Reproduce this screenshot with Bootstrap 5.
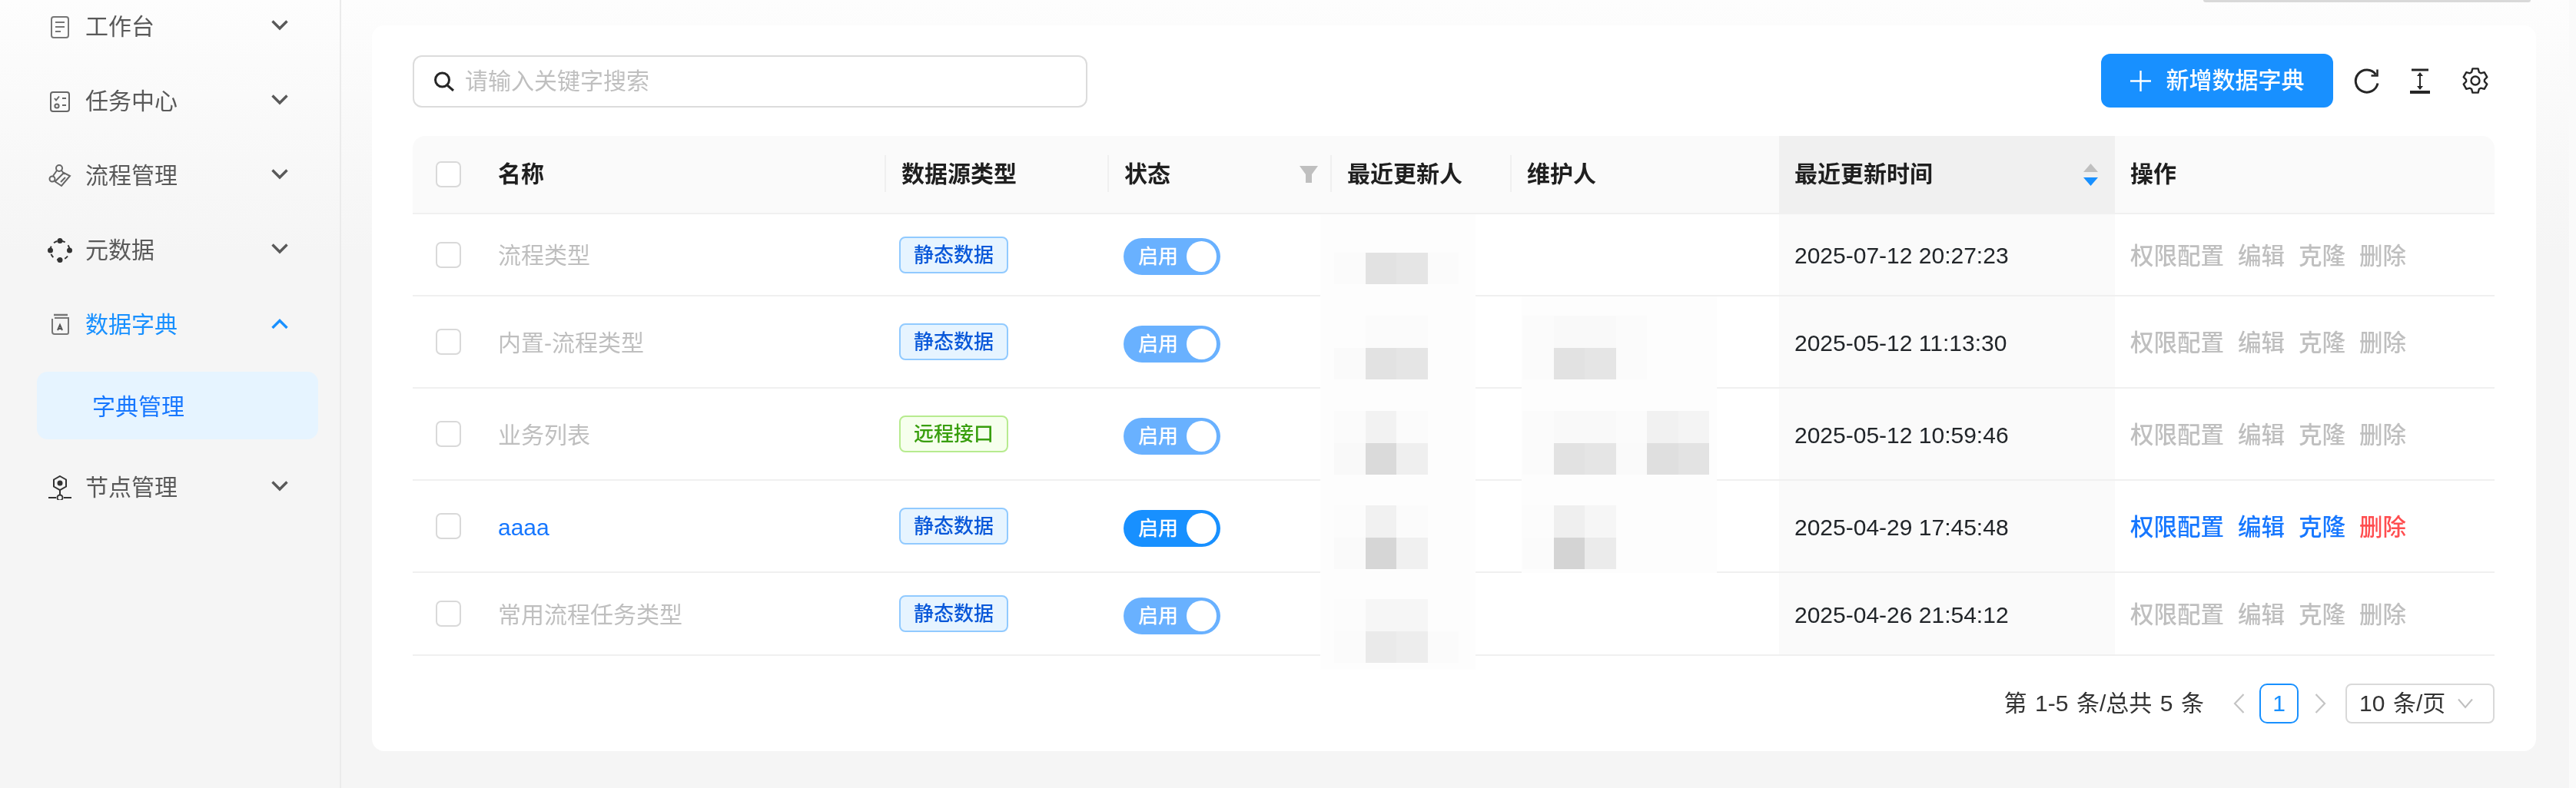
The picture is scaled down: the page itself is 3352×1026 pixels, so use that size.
<!DOCTYPE html>
<html lang="zh-CN">
<head>
<meta charset="utf-8">
<title>字典管理</title>
<link rel="stylesheet" href="https://cdn.jsdelivr.net/npm/bootstrap@5.3.0/dist/css/bootstrap.min.css">
<style>
html,body{height:1026px;overflow:hidden;background:#f5f5f5}
body{font-family:"Liberation Sans","Noto Sans CJK SC",sans-serif;font-size:30px;line-height:1.4;color:#262626}
.shell{height:1026px;background:linear-gradient(180deg,#fdfdfd 0,#f5f5f5 330px);filter:blur(.55px)}
.side{width:444px;flex:none;border-right:2px solid #ebebeb}
.menu{margin-top:-8px;padding:0;list-style:none}
.menu-row{height:86px;margin-bottom:11px;padding:0 67px 0 62px;color:#595959;gap:17px}
.menu-row.on{color:#1890ff;margin-bottom:18px}
.menu-row .lab{flex:1}
.ico{width:32px;height:32px;flex:none}
.chev{width:22px;height:15px;flex:none;margin-top:-6px}
.sub{height:88px;margin:0 28px 20px 48px;padding:3px 0 0 72px;border-radius:14px;background:#e6f4ff;color:#1677ff}
.main{flex:1;min-width:0;padding-right:43px}
.topedge{width:426px;height:3px;margin:0 7px 0 auto;background:#d9d9d9;border-radius:0 0 5px 5px}
.panel{margin:30px 0 0 40px;padding:37px 54px 36px 53px;background:#fff;border-radius:16px}
.strip{width:9px;flex:none;background:#fafafa}
.searchbox{width:878px;height:68px;padding:0 24px 0 25px;border:2px solid #dcdcdc;border-radius:12px;color:#bfbfbf;gap:13px;margin-top:1px}
.searchbox svg{width:28px;height:26px;flex:none}
.addbtn{width:302px;height:70px;padding:0;gap:20px;background:#1890ff;border:0;border-radius:12px;color:#fff;font-size:30px;line-height:1.4;font-weight:500}
.addbtn:hover{background:#1890ff;color:#fff}
.tool{flex:none;display:block}
.tool-a{margin-left:27px}
.tool-b{margin-left:39px}
.tool-c{margin-left:42px;margin-right:8px}
.dict{margin:37px 0 0;table-layout:fixed;width:2709px;border-collapse:separate;border-spacing:0;--bs-table-bg:transparent}
.dict>:not(caption)>*>*{padding:0 0 0 20px;border-bottom:2px solid #f0f0f0;background:transparent;color:inherit;box-shadow:none;vertical-align:middle}
.dict thead tr{height:102px}
.dict>thead>tr>th{background:#fafafa;font-weight:700;color:#1f1f1f;position:relative}
.dict thead th:first-child{border-top-left-radius:16px}
.dict thead th:last-child{border-top-right-radius:16px}
.dict thead th.sep::after{content:"";position:absolute;right:0;top:25px;height:48px;width:2px;background:#f0f0f0}
.dict>thead>tr>th.sorted{background:#f0f0f0}
.dict>tbody>tr>td.sorted{background:#fafafa;padding-top:3px}
.rh-a{height:107px}.rh-b{height:120px}.rh-c{height:108px}
.dict .form-check-input{width:33px;height:34px;margin:0 0 0 10px;display:block;border:2px solid #d9d9d9;border-radius:7px;float:none}
.dict>tbody>tr>td.nm{color:#bfbfbf;padding-top:3px}
.dict>tbody>tr>td.nm.live{color:#1677ff}
.tag{display:inline-block;width:142px;height:48px;border:2px solid #91caff;border-radius:8px;background:#e6f4ff;color:#0958d9;font-size:26px;font-weight:500;line-height:44px;text-align:center;margin-left:-3px}
.tag.ok{border-color:#b7eb8f;background:#f6ffed;color:#389e0d}
.swt{width:126px;height:48px;padding:0 5px 0 19px;border-radius:24px;background:#69b1ff;color:#fff;font-size:26px;font-weight:500;line-height:1;margin:5px 0 0 -1px}
.swt.live{background:#1890ff}
.swt i{display:block;width:39px;height:40px;border-radius:50%;background:#fff}
.ops{gap:18px;color:#bfbfbf;font-size:30.5px;font-weight:500;padding-top:3px}
.ops.live{color:#1677ff}
.ops.live .del{color:#ff4d4f}
.carets{gap:7px;width:19px}
.head-filter{padding-right:18px}
.head-sort{padding-right:22px}
.dict .wrapcell{position:relative}
.mz{position:absolute;top:0;bottom:-2px;background:#fdfdfd;z-index:1}
.mz.a{left:-15px;width:202px}
.mz.b{left:13px;width:254px}
.mzg{position:absolute;display:grid;grid-auto-rows:41.5px;grid-template-columns:repeat(6,40.5px)}
.mz.a .mzg{left:18px}
.mz.b .mzg{left:1px}
.bt14 .mzg{bottom:16px}.bt10 .mzg{bottom:12px}.bt6 .mzg{bottom:8px}.bt3 .mzg{bottom:5px}
.mz.over{bottom:-20px}
.over .mzg{bottom:9px}
.cfb{background:#fbfbfb}.cfc{background:#fcfcfc}.cfa{background:#fafafa}.cf9{background:#f9f9f9}.cf6{background:#f6f6f6}.cf4{background:#f4f4f4}.cf2{background:#f2f2f2}.cf1{background:#f1f1f1}.cf0{background:#f0f0f0}.cef{background:#efefef}.ced{background:#ededed}.ceb{background:#ebebeb}.cea{background:#eaeaea}.ce5{background:#e5e5e5}.ce3{background:#e3e3e3}.ce2{background:#e2e2e2}.cdf{background:#dfdfdf}.cda{background:#dadada}.cd6{background:#d6d6d6}.cd4{background:#d4d4d4}.c00{background:transparent}
.pager{margin-top:36px;height:52px;color:#333;word-spacing:2.200px}
.pnum{width:51px;height:52px;border:2px solid #1890ff;border-radius:10px;color:#1890ff;margin:0 21px 0 19px}
.pgo{width:15px;height:28px;flex:none}
.pgo-first{margin-left:38px}
.psize{width:194px;height:52px;margin-left:25px;padding:0 26px 0 16px;border:2px solid #d9d9d9;border-radius:8px}
</style>
</head>
<body>
<div class="shell d-flex">
  <aside class="side">
    <ul class="menu">
      <li class="menu-row d-flex align-items-center">
        <svg class="ico" viewBox="0 0 32 32" fill="none" stroke="#777" stroke-width="2"><rect x="5" y="3" width="22" height="27" rx="3"/><path d="M10 10h12M10 16h12M10 22h7"/></svg>
        <span class="lab">工作台</span>
        <svg class="chev" viewBox="0 0 22 15" fill="none" stroke="#595959" stroke-width="3.4"><path d="M1.5 2.5 11 12l9.500-9.500"/></svg>
      </li>
      <li class="menu-row d-flex align-items-center">
        <svg class="ico" viewBox="0 0 32 32" fill="none" stroke="#666" stroke-width="2"><rect x="4" y="4" width="24" height="25" rx="3"/><path d="M9 12l2 2.500 4-5M19 12h5M19 21h5"/><circle cx="12" cy="22" r="2.600"/></svg>
        <span class="lab">任务中心</span>
        <svg class="chev" viewBox="0 0 22 15" fill="none" stroke="#595959" stroke-width="3.4"><path d="M1.5 2.5 11 12l9.500-9.500"/></svg>
      </li>
      <li class="menu-row d-flex align-items-center">
        <svg class="ico" viewBox="0 0 32 32" fill="none" stroke="#666" stroke-width="2"><circle cx="15" cy="6" r="4"/><path d="M12 9 7 16M18 9l4 5"/><circle cx="6" cy="20" r="3.500"/><path d="M9 23l9 6 11-13-8-4-11 11"/><path d="M17 24l6-6"/></svg>
        <span class="lab">流程管理</span>
        <svg class="chev" viewBox="0 0 22 15" fill="none" stroke="#595959" stroke-width="3.4"><path d="M1.5 2.5 11 12l9.500-9.500"/></svg>
      </li>
      <li class="menu-row d-flex align-items-center">
        <svg class="ico" viewBox="0 0 32 32" fill="#333" stroke="none"><circle cx="16" cy="3.500" r="3.500"/><circle cx="16" cy="28.500" r="3.500"/><circle cx="3.500" cy="16" r="3.500"/><circle cx="28.500" cy="16" r="3.500"/><circle cx="16" cy="16" r="12.500" fill="none" stroke="#333" stroke-width="2" stroke-dasharray="5 5.500" stroke-dashoffset="2.500"/></svg>
        <span class="lab">元数据</span>
        <svg class="chev" viewBox="0 0 22 15" fill="none" stroke="#595959" stroke-width="3.4"><path d="M1.5 2.5 11 12l9.500-9.500"/></svg>
      </li>
      <li class="menu-row on d-flex align-items-center">
        <svg class="ico" viewBox="0 0 32 32" fill="none" stroke="#777" stroke-width="2"><path d="M8 3h18" stroke-width="2.500"/><path d="M6 8v17a3 3 0 0 0 3 3h16a2 2 0 0 0 2-2V7H9"/><path d="M13 23l3-7 3 7M14 21h4" stroke="#555"/></svg>
        <span class="lab">数据字典</span>
        <svg class="chev" viewBox="0 0 22 15" fill="none" stroke="#1890ff" stroke-width="3.4"><path d="M1.5 14 11 4.500 20.500 14"/></svg>
      </li>
      <li class="sub d-flex align-items-center">字典管理</li>
      <li class="menu-row d-flex align-items-center">
        <svg class="ico" viewBox="0 0 32 32" fill="none" stroke="#333" stroke-width="2"><path d="M16 1 24 5.500v9L16 19l-8-4.500v-9z"/><circle cx="16" cy="10" r="2.500" fill="#333"/><path d="M16 19v7M1 29h10M21 29h10"/><circle cx="16" cy="29" r="3.500"/></svg>
        <span class="lab">节点管理</span>
        <svg class="chev" viewBox="0 0 22 15" fill="none" stroke="#595959" stroke-width="3.4"><path d="M1.5 2.5 11 12l9.500-9.500"/></svg>
      </li>
    </ul>
  </aside>
  <main class="main">
    <div class="topedge"></div>
    <section class="panel">
      <div class="d-flex align-items-center">
        <div class="searchbox d-flex align-items-center">
          <svg viewBox="0 0 28 26" fill="none" stroke="#262626" stroke-width="3"><circle cx="11.500" cy="11" r="9"/><path d="M18 18l8 7"/></svg>
          <span>请输入关键字搜索</span>
        </div>
        <button type="button" class="btn addbtn ms-auto d-flex align-items-center justify-content-center">
          <svg width="27" height="27" viewBox="0 0 27 27" stroke="#fff" stroke-width="2.400"><path d="M13.500 0v27M0 13.500h27"/></svg>
          <span>新增数据字典</span>
        </button>
        <svg class="tool tool-a" width="34" height="34" viewBox="0 0 34 34" fill="none" stroke="#262626" stroke-width="3"><path d="M28.500 9A14.500 14.500 0 1 0 31 20.500"/><path d="M30.500 2.500v8h-8" stroke-width="2.500"/></svg>
        <svg class="tool tool-b" width="26" height="33" viewBox="0 0 26 33" fill="none" stroke="#262626"><path d="M2 2h22" stroke-width="3"/><path d="M0 31h26" stroke-width="4"/><path d="M13 6v21" stroke-width="2"/><path d="M9 10l4-5 4 5zM9 23l4 5 4-5z" fill="#262626" stroke="none"/></svg>
        <svg class="tool tool-c" width="34" height="34" viewBox="-17 -17 34 34" fill="none" stroke="#262626" stroke-width="2.400" stroke-linejoin="round"><polygon points="-4.880,-10.960 -3.600,-15.590 3.600,-15.590 4.880,-10.960 7.050,-9.710 11.700,-10.910 15.300,-4.680 11.930,-1.250 11.930,1.250 15.300,4.680 11.700,10.910 7.050,9.710 4.880,10.960 3.600,15.590 -3.600,15.590 -4.880,10.960 -7.050,9.710 -11.700,10.910 -15.300,4.680 -11.930,1.250 -11.930,-1.250 -15.300,-4.680 -11.700,-10.910 -7.050,-9.710"/><circle r="5.500"/></svg>
      </div>
      <table class="table dict">
        <colgroup><col style="width:91px"><col style="width:525px"><col style="width:290px"><col style="width:290px"><col style="width:234px"><col style="width:348px"><col style="width:437px"><col style="width:494px"></colgroup>
        <thead>
          <tr>
            <th><input class="form-check-input" type="checkbox" aria-label="全选"></th>
            <th class="sep">名称</th>
            <th class="sep">数据源类型</th>
            <th class="sep"><div class="head-filter d-flex align-items-center justify-content-between"><span>状态</span><svg width="24" height="22" viewBox="0 0 24 22" fill="#bfbfbf"><path d="M0 0h24l-8 11v11H8V11z"/></svg></div></th>
            <th class="sep">最近更新人</th>
            <th>维护人</th>
            <th class="sorted"><div class="head-sort d-flex align-items-center justify-content-between"><span>最近更新时间</span><span class="carets d-flex flex-column"><svg width="19" height="11" viewBox="0 0 19 11" fill="#bfbfbf"><path d="M9.500 0 19 11H0z"/></svg><svg width="19" height="11" viewBox="0 0 19 11" fill="#1890ff"><path d="M9.500 11 19 0H0z"/></svg></span></div></th>
            <th>操作</th>
          </tr>
        </thead>
        <tbody>
          <tr class="rh-a">
            <td><input class="form-check-input" type="checkbox" aria-label="选择"></td>
            <td class="nm">流程类型</td>
            <td><span class="tag">静态数据</span></td>
            <td><div class="swt d-flex align-items-center justify-content-between"><span>启用</span><i></i></div></td>
            <td class="wrapcell"><div class="mz a bt14"><div class="mzg"><b class="cfb"></b><b class="ce2"></b><b class="ce5"></b><b class="cfb"></b></div></div></td>
            <td></td>
            <td class="sorted">2025-07-12 20:27:23</td>
            <td><div class="ops d-flex"><span>权限配置</span><span>编辑</span><span>克隆</span><span>删除</span></div></td>
          </tr>
          <tr class="rh-b">
            <td><input class="form-check-input" type="checkbox" aria-label="选择"></td>
            <td class="nm">内置-流程类型</td>
            <td><span class="tag">静态数据</span></td>
            <td><div class="swt d-flex align-items-center justify-content-between"><span>启用</span><i></i></div></td>
            <td class="wrapcell"><div class="mz a bt10"><div class="mzg"><b class="c00"></b><b class="cfb"></b><b class="cfb"></b><b class="c00"></b><b class="c00"></b><b class="c00"></b><b class="cfa"></b><b class="ce2"></b><b class="ce5"></b></div></div></td>
            <td class="wrapcell"><div class="mz b bt10"><div class="mzg"><b class="cfb"></b><b class="cf9"></b><b class="cf9"></b><b class="cfb"></b><b class="c00"></b><b class="c00"></b><b class="cfb"></b><b class="ce2"></b><b class="ce5"></b><b class="cfb"></b></div></div></td>
            <td class="sorted">2025-05-12 11:13:30</td>
            <td><div class="ops d-flex"><span>权限配置</span><span>编辑</span><span>克隆</span><span>删除</span></div></td>
          </tr>
          <tr class="rh-b">
            <td><input class="form-check-input" type="checkbox" aria-label="选择"></td>
            <td class="nm">业务列表</td>
            <td><span class="tag ok">远程接口</span></td>
            <td><div class="swt d-flex align-items-center justify-content-between"><span>启用</span><i></i></div></td>
            <td class="wrapcell"><div class="mz a bt6"><div class="mzg"><b class="cfb"></b><b class="cf2"></b><b class="cfb"></b><b class="c00"></b><b class="c00"></b><b class="c00"></b><b class="cf9"></b><b class="cda"></b><b class="cef"></b></div></div></td>
            <td class="wrapcell"><div class="mz b bt6"><div class="mzg"><b class="cfb"></b><b class="cf9"></b><b class="cf9"></b><b class="cfb"></b><b class="cf1"></b><b class="cf4"></b><b class="cfb"></b><b class="ce2"></b><b class="ce5"></b><b class="cfa"></b><b class="cdf"></b><b class="ce3"></b></div></div></td>
            <td class="sorted">2025-05-12 10:59:46</td>
            <td><div class="ops d-flex"><span>权限配置</span><span>编辑</span><span>克隆</span><span>删除</span></div></td>
          </tr>
          <tr class="rh-b">
            <td><input class="form-check-input" type="checkbox" aria-label="选择"></td>
            <td class="nm live">aaaa</td>
            <td><span class="tag">静态数据</span></td>
            <td><div class="swt live d-flex align-items-center justify-content-between"><span>启用</span><i></i></div></td>
            <td class="wrapcell"><div class="mz a bt3"><div class="mzg"><b class="cfc"></b><b class="cf1"></b><b class="cfb"></b><b class="c00"></b><b class="c00"></b><b class="c00"></b><b class="cfa"></b><b class="cd6"></b><b class="cf0"></b></div></div></td>
            <td class="wrapcell"><div class="mz b bt3"><div class="mzg"><b class="cfc"></b><b class="cef"></b><b class="cf6"></b><b class="c00"></b><b class="c00"></b><b class="c00"></b><b class="cfb"></b><b class="cd4"></b><b class="ceb"></b></div></div></td>
            <td class="sorted">2025-04-29 17:45:48</td>
            <td><div class="ops live d-flex"><span>权限配置</span><span>编辑</span><span>克隆</span><span class="del">删除</span></div></td>
          </tr>
          <tr class="rh-c">
            <td><input class="form-check-input" type="checkbox" aria-label="选择"></td>
            <td class="nm">常用流程任务类型</td>
            <td><span class="tag">静态数据</span></td>
            <td><div class="swt d-flex align-items-center justify-content-between"><span>启用</span><i></i></div></td>
            <td class="wrapcell"><div class="mz a over"><div class="mzg"><b class="cfc"></b><b class="cf6"></b><b class="cf6"></b><b class="c00"></b><b class="c00"></b><b class="c00"></b><b class="cfb"></b><b class="cea"></b><b class="ced"></b><b class="cfb"></b></div></div></td>
            <td></td>
            <td class="sorted">2025-04-26 21:54:12</td>
            <td><div class="ops d-flex"><span>权限配置</span><span>编辑</span><span>克隆</span><span>删除</span></div></td>
          </tr>
        </tbody>
      </table>
      <div class="pager d-flex align-items-center justify-content-end">
        <span>第 1-5 条/总共 5 条</span>
        <svg class="pgo pgo-first" viewBox="0 0 15 28" fill="none" stroke="#c4c4c4" stroke-width="2.200"><path d="M13.500 2 2 14l11.500 12"/></svg>
        <span class="pnum d-flex align-items-center justify-content-center">1</span>
        <svg class="pgo" viewBox="0 0 15 28" fill="none" stroke="#c4c4c4" stroke-width="2.200"><path d="M1.500 2 13 14 1.500 26"/></svg>
        <div class="psize d-flex align-items-center justify-content-between"><span>10 条/页</span><svg width="20" height="14" viewBox="0 0 20 14" fill="none" stroke="#bfbfbf" stroke-width="2"><path d="M1 1.500 10 12l9-10.500"/></svg></div>
      </div>
    </section>
  </main>
  <div class="strip"></div>
</div>
<script src="https://cdn.jsdelivr.net/npm/bootstrap@5.3.0/dist/js/bootstrap.bundle.min.js"></script>
</body>
</html>
